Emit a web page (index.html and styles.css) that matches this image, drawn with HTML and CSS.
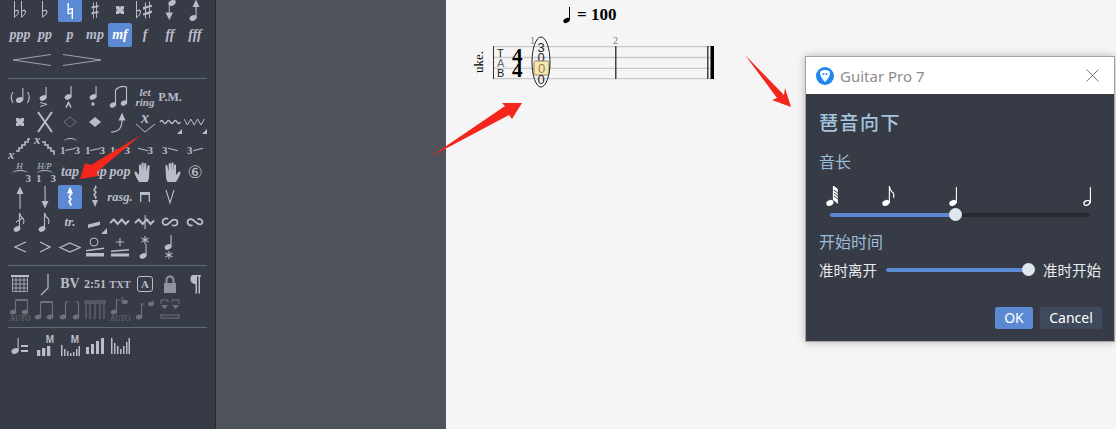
FILE: index.html
```html
<!DOCTYPE html>
<html lang="zh-CN">
<head>
  <meta charset="UTF-8">
  <title>Guitar Pro 7</title>
  <link rel="stylesheet" href="styles.css">
</head>
<body>

<svg class="defs" width="0" height="0">
  <symbol id="flat" viewBox="0 0 24 24"><path d="M9 3h1v9.500c1.800-1.400 4.500-1.100 4.500 1.200 0 2.400-3 4.400-5.500 6.300zM10 13.800v4.300c1.700-1.200 3.300-2.400 3.300-3.900 0-1.300-2-1.500-3.300-.4z"/></symbol>
  <symbol id="dflat" viewBox="0 0 24 24"><path d="M6 3h1v9.500c1.500-1.400 4-1.100 4 1.200 0 2.400-2.600 4.400-5 6.300zM7 13.800v4.300c1.400-1.200 2.900-2.400 2.900-3.900 0-1.300-1.800-1.500-2.900-.4z"/><path d="M13 3h1v9.500c1.500-1.400 4-1.100 4 1.200 0 2.400-2.600 4.400-5 6.300zM14 13.800v4.300c1.400-1.200 2.900-2.400 2.900-3.900 0-1.300-1.800-1.500-2.900-.4z"/></symbol>
  <symbol id="natural" viewBox="0 0 24 24"><path d="M9.500 5h1.400v5.700l4.100-1V21h-1.400v-5.400l-4.100 1zM10.900 12.200v2.800l2.700-.7v-2.800z"/></symbol>
  <symbol id="sharp" viewBox="0 0 24 24"><path d="M10 4.500h.9v3.800l2.200-.6V4h.9v3.500l1.500-.4v2l-1.500.4v3.900l1.500-.4v2l-1.500.4V20h-.9v-4.800l-2.200.6V20.500H10v-4.500l-1.500.4v-2l1.500-.4v-3.900l-1.500.4v-2l1.500-.4zM10.900 10.100v3.900l2.200-.6V9.500z"/></symbol>
  <symbol id="dsharp" viewBox="0 0 24 24"><path d="M8 8h3l1 1.500L13 8h3v3l-1.500 1 1.500 1v3h-3l-1-1.500L11 16H8v-3l1.500-1L8 11z"/></symbol>
  <symbol id="flatsharp" viewBox="0 0 24 24"><path d="M3 3h1v9.500c1.500-1.500 4-1.200 4 1.200 0 2.600-2.700 4.800-5 7zM4 13.800v4.800c1.400-1.300 2.800-2.700 2.800-4.300 0-1.400-1.700-1.700-2.800-.5z"/><path d="M12 4.500h1v3.800l3-.8V3.500h1v3.700l2-.5v2.100l-2 .5v3.800l2-.5v2.100l-2 .5V20h-1v-4l-3 .8V20.500h-1v-3.400l-2 .5v-2.100l2-.5v-3.800l-2 .5V9.100l2-.5zM13 10.400v3.800l3-.8V9.600z"/></symbol>
  <symbol id="notedown" viewBox="0 0 24 24"><ellipse cx="14" cy="5" rx="3.700" ry="2.700" transform="rotate(-25 14 5)"/><rect x="16.400" y="1" width="1" height="4"/><rect x="10.800" y="5" width="1" height="10"/><path d="M7.500 14.500h7.500L11.300 22z"/></symbol>
  <symbol id="noteup" viewBox="0 0 24 24"><ellipse cx="10" cy="20" rx="3.700" ry="2.700" transform="rotate(-25 10 20)"/><rect x="12.500" y="8" width="1.100" height="12"/><path d="M9.500 9L13 1.500 16.500 9z"/></symbol>
  <symbol id="ghost" viewBox="0 0 24 24"><ellipse cx="11.500" cy="15" rx="3.700" ry="2.700" transform="rotate(-25 11.500 15)"/><rect x="14.300" y="3" width="1.100" height="12"/><path d="M5 7Q1.500 12 5 18M19.500 7q3.500 5 0 11" fill="none" stroke="currentColor" stroke-width="1.200"/></symbol>
  <symbol id="accent" viewBox="0 0 24 24"><ellipse cx="10" cy="13" rx="3.500" ry="2.600" transform="rotate(-25 10 13)"/><rect x="12.500" y="2" width="1.100" height="11"/><path d="M7 17.500l7 1.800-7 2.200" fill="none" stroke="currentColor"/></symbol>
  <symbol id="marcato" viewBox="0 0 24 24"><ellipse cx="10" cy="12" rx="3.500" ry="2.600" transform="rotate(-25 10 12)"/><rect x="12.500" y="1" width="1.100" height="11"/><path d="M8 22.500l2.500-5 2.500 5" fill="none" stroke="currentColor" stroke-width="1.600"/></symbol>
  <symbol id="stacc" viewBox="0 0 24 24"><ellipse cx="10" cy="12" rx="3.500" ry="2.600" transform="rotate(-25 10 12)"/><rect x="12.500" y="1" width="1.100" height="11"/><circle cx="10" cy="19" r="1.700"/></symbol>
  <symbol id="beamtie" viewBox="0 0 24 24"><ellipse cx="5" cy="20" rx="3.300" ry="2.400" transform="rotate(-25 5 20)"/><ellipse cx="16" cy="18" rx="3.300" ry="2.400" transform="rotate(-25 16 18)"/><path d="M7.500 20V5q5-5 11-3v16" fill="none" stroke="currentColor" stroke-width="1.100"/></symbol>
  <symbol id="bigx" viewBox="0 0 24 24"><path d="M5 2l14 20M19 2L5 22" fill="none" stroke="currentColor" stroke-width="2"/></symbol>
  <symbol id="hollow" viewBox="0 0 24 24"><path d="M12 7l6 5-6 5-6-5z" fill="none" stroke="currentColor"/></symbol>
  <symbol id="solid" viewBox="0 0 24 24"><path d="M12 7l6 5-6 5-6-5z"/></symbol>
  <symbol id="bendup" viewBox="0 0 24 24"><path d="M3 22c7 0 11-3 11-12" fill="none" stroke="currentColor" stroke-width="1.200"/><path d="M14 2.500l3.500 8h-7z"/></symbol>
  <symbol id="xv" viewBox="0 0 24 24"><path d="M3 14l9 8 10-8" fill="none" stroke="currentColor"/><text x="12" y="13" text-anchor="middle" class="svg-serif" font-size="16">x</text></symbol>
  <symbol id="wave" viewBox="0 0 24 24"><path d="M2 12q1.700-3 3.400 0t3.400 0 3.400 0 3.400 0 3.400 0 3.400 0" fill="none" stroke="currentColor" stroke-width="1.500"/><path d="M24 24v-5l-5 5z"/></symbol>
  <symbol id="zig" viewBox="0 0 24 24"><path d="M1 9l3.400 6 3.400-6 3.400 6 3.400-6 3.400 6 3.400-6" fill="none" stroke="currentColor"/><path d="M24 24v-5l-5 5z"/></symbol>
  <symbol id="slideup" viewBox="0 0 24 24"><text x="0" y="24" class="svg-serif" font-size="13">x</text><path d="M8 16h3v-3h3v-3h3V7h3V4h2" fill="none" stroke="currentColor" stroke-width="1.600"/></symbol>
  <symbol id="slidedown" viewBox="0 0 24 24"><text x="1" y="9" class="svg-serif" font-size="13">x</text><path d="M9 7h3v3h3v3h3v3h3v3h1" fill="none" stroke="currentColor" stroke-width="1.600"/></symbol>
  <symbol id="hand" viewBox="0 0 24 24"><path d="M6 22c-2-3-4-7-4.500-9-.3-1.500 1.200-2 2-1L6 15V5.500c0-1.500 2-1.500 2.100 0L8.500 11V3.500c0-1.500 2.200-1.500 2.200 0V11l.5-7c.1-1.500 2.100-1.500 2.100 0v7.500L14.500 6c.2-1.500 2.200-1.300 2.100.2L16 17c0 2-1 3.500-1.500 5z"/></symbol>
  <symbol id="hand2" viewBox="0 0 24 24"><path d="M18 22c2-3 4-7 4.500-9 .3-1.500-1.200-2-2-1L18 15V5.500c0-1.500-2-1.500-2.100 0L15.500 11V3.500c0-1.500-2.200-1.500-2.200 0V11l-.5-7c-.1-1.500-2.100-1.500-2.100 0v7.500L9.500 6c-.2-1.500-2.200-1.300-2.100.2L8 17c0 2 1 3.500 1.500 5z"/></symbol>
  <symbol id="up" viewBox="0 0 24 24"><rect x="11.500" y="7" width="1.100" height="17"/><path d="M8.500 9L12 1.500 15.500 9z"/></symbol>
  <symbol id="down" viewBox="0 0 24 24"><rect x="11.500" y="1" width="1.100" height="17"/><path d="M8.500 16L12 23.500 15.500 16z"/></symbol>
  <symbol id="waveup" viewBox="0 0 24 24"><path d="M12 8q1.800 1.200 0 2.500t0 2.500 0 2.500 0 2.500 0 2.500" fill="none" stroke="currentColor" stroke-width="1.600"/><path d="M9 8.500L12 2l3 6.500z"/></symbol>
  <symbol id="wavedown" viewBox="0 0 24 24"><path d="M12 1q1.800 1.200 0 2.500t0 2.500 0 2.500 0 2.500 0 2.500" fill="none" stroke="currentColor" stroke-width="1.600"/><path d="M9 15l3 7 3-7z"/></symbol>
  <symbol id="downstroke" viewBox="0 0 24 24"><path d="M7 7h10v10h-1.300v-7H8.300v7H7z"/></symbol>
  <symbol id="upstroke" viewBox="0 0 24 24"><path d="M8 5l4 13 4-13" fill="none" stroke="currentColor" stroke-width="1.100"/></symbol>
  <symbol id="grace" viewBox="0 0 24 24"><ellipse cx="9" cy="19" rx="3.500" ry="2.600" transform="rotate(-25 9 19)"/><path d="M11.500 19V3q1 4 4 6 1 2 0 5M8 12l7-4" fill="none" stroke="currentColor" stroke-width="1.100"/></symbol>
  <symbol id="grace2" viewBox="0 0 24 24"><ellipse cx="9" cy="19" rx="3.500" ry="2.600" transform="rotate(-25 9 19)"/><path d="M11.500 19V3q1 4 4 6 1 2 0 5" fill="none" stroke="currentColor" stroke-width="1.100"/></symbol>
  <symbol id="trem" viewBox="0 0 24 24"><path d="M5 14.500l12-3v3.500L5 18zM24 24v-6l-6 6z"/></symbol>
  <symbol id="wavy" viewBox="0 0 24 24"><path d="M2 13l3.800-3.500 3.800 4.500 4.200-4.500 3.800 4.500 3.400-3.500" fill="none" stroke="currentColor" stroke-width="2"/></symbol>
  <symbol id="wavyline" viewBox="0 0 24 24"><path d="M2 13l3.800-3.500 3.800 4.500 4.200-4.500 3.800 4.500 3.400-3.500" fill="none" stroke="currentColor" stroke-width="2"/><rect x="11.500" y="5" width="1.100" height="14"/></symbol>
  <symbol id="turn" viewBox="0 0 24 24"><path d="M10 9C7 7.500 4.500 9.500 4.500 12s3 4 5.500 2l4-3.500c2.500-2 5.500-.5 5.500 2s-2.500 4-5.500 2.500" fill="none" stroke="currentColor" stroke-width="1.800"/></symbol>
  <symbol id="turn2" viewBox="0 0 24 24"><path d="M9.500 15C7 16.500 4.500 14.500 4.500 12s3-4 5.500-2l4.500 3.500c2.500 2 5 .5 5-1.500s-2.500-4-5-2.500" fill="none" stroke="currentColor" stroke-width="1.800"/></symbol>
  <symbol id="lt" viewBox="0 0 24 24"><path d="M18 7L7 12l11 5" fill="none" stroke="currentColor" stroke-width="1.300"/></symbol>
  <symbol id="gt" viewBox="0 0 24 24"><path d="M7 7l10 5-10 5" fill="none" stroke="currentColor" stroke-width="1.300"/></symbol>
  <symbol id="ltgt" viewBox="0 0 24 24"><path d="M12 8l10 4.500L12 17 2 12.500z" fill="none" stroke="currentColor" stroke-width="1.300"/></symbol>
  <symbol id="openwedge" viewBox="0 0 24 24"><circle cx="11" cy="7" r="4" fill="none" stroke="currentColor"/><path d="M3 15l18-2.500V14L3 16.500zM3 18h18v3.500H3z"/></symbol>
  <symbol id="closewedge" viewBox="0 0 24 24"><path d="M12 3v8M8 7h8" fill="none" stroke="currentColor" stroke-width="1.100"/><path d="M3 15.500L21 14v1.500L3 17zM3 18.500h18V21.500H3z"/></symbol>
  <symbol id="starnote" viewBox="0 0 24 24"><path d="M12 1v8M8.500 3l7 4M15.500 3l-7 4" stroke="currentColor" fill="none" stroke-width="1.100"/><ellipse cx="10" cy="21" rx="3.500" ry="2.600" transform="rotate(-25 10 21)"/><rect x="12.500" y="9" width="1.100" height="12"/></symbol>
  <symbol id="notestar" viewBox="0 0 24 24"><ellipse cx="10" cy="12" rx="3.500" ry="2.600" transform="rotate(-25 10 12)"/><rect x="12.500" y="0" width="1.100" height="12"/><path d="M11 16v8M7.500 18l7 4M14.500 18l-7 4" stroke="currentColor" fill="none" stroke-width="1.100"/></symbol>
  <symbol id="chord" viewBox="0 0 24 24"><path d="M4.500 4.500h15v15h-15zM4.500 8h15M4.500 12h15M4.500 16h15M8 4.500v15M12 4.500v15M16 4.500v15" fill="none" stroke="currentColor" stroke-width=".8"/><path d="M3 3h18v2H3z"/></symbol>
  <symbol id="slash" viewBox="0 0 24 24"><path d="M15 2v14L8 23" fill="none" stroke="currentColor" stroke-width="1.200"/></symbol>
  <symbol id="lock" viewBox="0 0 24 24"><path d="M8.500 11V8a3.500 3.500 0 0 1 7 0v3" fill="none" stroke="currentColor" stroke-width="2"/><rect x="6" y="11" width="12" height="10"/></symbol>
  <symbol id="pilcrow" viewBox="0 0 24 24"><path d="M10.500 3H18v1.500h-1v17h-1.500v-17h-1.500v17h-1.500V12c-2.500 0-5-1.500-5-4.500S8 3 10.500 3z"/></symbol>
  <symbol id="beam" viewBox="0 0 24 24"><ellipse cx="5" cy="20" rx="3.300" ry="2.400" transform="rotate(-15 5 20)"/><ellipse cx="17" cy="20" rx="3.300" ry="2.400" transform="rotate(-15 17 20)"/><path d="M7.500 20V5M19.500 20V5" fill="none" stroke="currentColor" stroke-width="1.100"/><rect x="7.500" y="4" width="12" height="2"/></symbol>
  <symbol id="beamauto" viewBox="0 0 24 24"><ellipse cx="5" cy="15" rx="3.300" ry="2.400" transform="rotate(-15 5 15)"/><ellipse cx="17" cy="15" rx="3.300" ry="2.400" transform="rotate(-15 17 15)"/><path d="M7.500 15V3M19.500 15V3" fill="none" stroke="currentColor" stroke-width="1.100"/><rect x="7.500" y="2" width="12" height="2"/><text x="12" y="24" text-anchor="middle" class="svg-auto" font-size="7.500">AUTO</text></symbol>
  <symbol id="unbeam" viewBox="0 0 24 24"><ellipse cx="5" cy="20" rx="3.300" ry="2.400" transform="rotate(-15 5 20)"/><ellipse cx="18" cy="20" rx="3.300" ry="2.400" transform="rotate(-15 18 20)"/><path d="M7.500 20V5h3M20.500 20V5h-3" fill="none" stroke="currentColor" stroke-width="1.100"/></symbol>
  <symbol id="frame" viewBox="0 0 24 24"><path d="M2 4h20v2H2zM3 6v16M7 6v16M12 6v16M17 6v16M21 6v16" fill="none" stroke="currentColor"/></symbol>
  <symbol id="tiltauto" viewBox="0 0 24 24"><ellipse cx="6" cy="15" rx="3.300" ry="2.400" transform="rotate(-15 6 15)"/><ellipse cx="17" cy="5" rx="3" ry="2.200" transform="rotate(-15 17 5)"/><path d="M8.500 15V3h3M14 5V0" fill="none" stroke="currentColor" stroke-width="1.100"/><text x="12" y="24" text-anchor="middle" class="svg-auto" font-size="7.500">AUTO</text></symbol>
  <symbol id="tilt" viewBox="0 0 24 24"><ellipse cx="6" cy="20" rx="3.300" ry="2.400" transform="rotate(-15 6 20)"/><ellipse cx="18" cy="7" rx="3" ry="2.200" transform="rotate(-15 18 7)"/><path d="M8.500 20V7h3M20 7V3" fill="none" stroke="currentColor" stroke-width="1.100"/></symbol>
  <symbol id="brackets" viewBox="0 0 24 24"><path d="M3 7V3h7v2M14 5V3h7v4M3 17v4h18v-4M3 18h18" fill="none" stroke="currentColor"/><path d="M3 8h7l-3.500 4zM14 8h7l-3.500 4z"/></symbol>
  <symbol id="tempo" viewBox="0 0 24 24"><ellipse cx="7" cy="17" rx="3.700" ry="2.700" transform="rotate(-25 7 17)"/><rect x="9.600" y="4" width="1.100" height="13"/><rect x="13" y="11" width="7" height="2"/><rect x="13" y="16" width="7" height="2"/></symbol>
  <symbol id="bars1" viewBox="0 0 24 24"><rect x="4" y="16" width="3.300" height="6"/><rect x="9" y="14" width="3.300" height="8"/><rect x="14" y="12" width="3.300" height="10"/></symbol>
  <symbol id="bars2" viewBox="0 0 24 24"><path d="M3 11h1.500v11H3zM6 15h1.500v7H6zM9 17h1.500v5H9zM12 19h1.500v3H12zM15 18h1.500v4H15zM18 15h1.500v7H18zM20.500 12H22v10h-1.500z"/></symbol>
  <symbol id="bars3" viewBox="0 0 24 24"><rect x="3" y="13" width="3" height="7"/><rect x="8" y="10" width="3" height="10"/><rect x="13" y="7" width="3" height="13"/><rect x="18" y="4" width="3" height="16"/></symbol>
  <symbol id="bars4" viewBox="0 0 24 24"><path d="M3 4h1.500v16H3zM6 9h1.500v11H6zM9 12h1.500v8H9zM12 15h1.500v5H12zM15 12h1.500v8H15zM18 8h1.500v12H18zM20.500 4H22v16h-1.500z"/></symbol>
  <symbol id="whitequarter" viewBox="0 0 24 24"><ellipse cx="9" cy="19" rx="3.800" ry="2.800" transform="rotate(-25 9 19)"/><rect x="12" y="3" width="1.100" height="16"/></symbol>
  <symbol id="thirtysecond" viewBox="0 0 24 24"><ellipse cx="9" cy="19" rx="3.800" ry="2.800" transform="rotate(-25 9 19)"/><path d="M12 2h1.200l3.800 3v15l-3.800-3.500H12z"/><path d="M13 6l4 3M13 9l4 3M13 12l4 3" stroke="#373b45" fill="none"/></symbol>
  <symbol id="eighth" viewBox="0 0 24 24"><ellipse cx="9" cy="19" rx="3.800" ry="2.800" transform="rotate(-25 9 19)"/><path d="M12.500 19V2q1 5 4 7 1 2 .3 5" fill="none" stroke="currentColor" stroke-width="1.100"/></symbol>
  <symbol id="half" viewBox="0 0 24 24"><ellipse cx="9" cy="19" rx="3.200" ry="2.200" transform="rotate(-25 9 19)" fill="none" stroke="currentColor" stroke-width="1.300"/><rect x="12" y="3" width="1.100" height="16"/></symbol>
</svg>

<div class="app">
  <aside class="palette">
    <div class="tools tools-first">
      <span class="tool"><svg><use href="#dflat"/></svg></span>
      <span class="tool"><svg><use href="#flat"/></svg></span>
      <span class="tool is-active"><svg><use href="#natural"/></svg></span>
      <span class="tool"><svg><use href="#sharp"/></svg></span>
      <span class="tool"><svg><use href="#dsharp"/></svg></span>
      <span class="tool"><svg><use href="#flatsharp"/></svg></span>
      <span class="tool"><svg><use href="#notedown"/></svg></span>
      <span class="tool"><svg><use href="#noteup"/></svg></span>

      <span class="tool dyn">ppp</span>
      <span class="tool dyn">pp</span>
      <span class="tool dyn">p</span>
      <span class="tool dyn">mp</span>
      <span class="tool dyn is-active">mf</span>
      <span class="tool dyn">f</span>
      <span class="tool dyn">ff</span>
      <span class="tool dyn">fff</span>

      <span class="tool wide"><svg viewBox="0 0 49 24"><path d="M5 12L43 6.500M5 12l38 5.500" fill="none" stroke="currentColor" stroke-width=".8"/></svg></span>
      <span class="tool wide"><svg viewBox="0 0 49 24"><path d="M5 6.500L43 12M5 17.500L43 12" fill="none" stroke="currentColor" stroke-width=".8"/></svg></span>
    </div>

    <hr class="divider">

    <div class="tools">
      <span class="tool"><svg><use href="#ghost"/></svg></span>
      <span class="tool"><svg><use href="#accent"/></svg></span>
      <span class="tool"><svg><use href="#marcato"/></svg></span>
      <span class="tool"><svg><use href="#stacc"/></svg></span>
      <span class="tool"><svg><use href="#beamtie"/></svg></span>
      <span class="tool letring">let<br>ring</span>
      <span class="tool word">P.M.</span>
      <span class="tool"></span>

      <span class="tool"><svg><use href="#dsharp"/></svg></span>
      <span class="tool"><svg><use href="#bigx"/></svg></span>
      <span class="tool dim"><svg><use href="#hollow"/></svg></span>
      <span class="tool"><svg><use href="#solid"/></svg></span>
      <span class="tool"><svg><use href="#bendup"/></svg></span>
      <span class="tool"><svg><use href="#xv"/></svg></span>
      <span class="tool"><svg><use href="#wave"/></svg></span>
      <span class="tool"><svg><use href="#zig"/></svg></span>

      <span class="tool"><svg><use href="#slideup"/></svg></span>
      <span class="tool"><svg><use href="#slidedown"/></svg></span>
      <span class="tool tie arc"><i>1</i><i>3</i></span>
      <span class="tool tie"><i>1</i><i>3</i></span>
      <span class="tool tie"><i>1</i><i>3</i></span>
      <span class="tool tie right"><i>3</i></span>
      <span class="tool tie left"><i>3</i></span>
      <span class="tool tie left up"><i>3</i></span>

      <span class="tool hp arc"><b>H</b><i>3</i></span>
      <span class="tool hp arc"><b>H/P</b><i>1</i><i>3</i></span>
      <span class="tool word-it">tap</span>
      <span class="tool word-it">slap</span>
      <span class="tool word-it">pop</span>
      <span class="tool"><svg><use href="#hand"/></svg></span>
      <span class="tool"><svg><use href="#hand2"/></svg></span>
      <span class="tool circled">⑥</span>

      <span class="tool"><svg><use href="#up"/></svg></span>
      <span class="tool"><svg><use href="#down"/></svg></span>
      <span class="tool is-active"><svg><use href="#waveup"/></svg></span>
      <span class="tool"><svg><use href="#wavedown"/></svg></span>
      <span class="tool rasg">rasg.</span>
      <span class="tool"><svg><use href="#downstroke"/></svg></span>
      <span class="tool"><svg><use href="#upstroke"/></svg></span>
      <span class="tool"></span>

      <span class="tool"><svg><use href="#grace"/></svg></span>
      <span class="tool"><svg><use href="#grace2"/></svg></span>
      <span class="tool word-it small">tr.</span>
      <span class="tool"><svg><use href="#trem"/></svg></span>
      <span class="tool"><svg><use href="#wavy"/></svg></span>
      <span class="tool"><svg><use href="#wavyline"/></svg></span>
      <span class="tool"><svg><use href="#turn"/></svg></span>
      <span class="tool"><svg><use href="#turn2"/></svg></span>

      <span class="tool"><svg><use href="#lt"/></svg></span>
      <span class="tool"><svg><use href="#gt"/></svg></span>
      <span class="tool"><svg><use href="#ltgt"/></svg></span>
      <span class="tool"><svg><use href="#openwedge"/></svg></span>
      <span class="tool"><svg><use href="#closewedge"/></svg></span>
      <span class="tool"><svg><use href="#starnote"/></svg></span>
      <span class="tool"><svg><use href="#notestar"/></svg></span>
      <span class="tool"></span>
    </div>

    <hr class="divider">

    <div class="tools">
      <span class="tool"><svg><use href="#chord"/></svg></span>
      <span class="tool"><svg><use href="#slash"/></svg></span>
      <span class="tool word big">BV</span>
      <span class="tool word">2:51</span>
      <span class="tool word tiny">TXT</span>
      <span class="tool"><span class="boxed">A</span></span>
      <span class="tool soft"><svg><use href="#lock"/></svg></span>
      <span class="tool"><svg><use href="#pilcrow"/></svg></span>

      <span class="tool dim"><svg><use href="#beamauto"/></svg></span>
      <span class="tool dim"><svg><use href="#beam"/></svg></span>
      <span class="tool dim"><svg><use href="#unbeam"/></svg></span>
      <span class="tool dim"><svg><use href="#frame"/></svg></span>
      <span class="tool dim"><svg><use href="#tiltauto"/></svg></span>
      <span class="tool dim"><svg><use href="#tilt"/></svg></span>
      <span class="tool dim"><svg><use href="#brackets"/></svg></span>
      <span class="tool"></span>
    </div>

    <hr class="divider">

    <div class="tools">
      <span class="tool"><svg><use href="#tempo"/></svg></span>
      <span class="tool bars"><b>M</b><svg><use href="#bars1"/></svg></span>
      <span class="tool bars"><b>M</b><svg><use href="#bars2"/></svg></span>
      <span class="tool"><svg><use href="#bars3"/></svg></span>
      <span class="tool"><svg><use href="#bars4"/></svg></span>
    </div>
  </aside>

  <div class="side-panel"></div>

  <main class="page">
    <svg class="score" width="300" height="100" viewBox="0 0 300 100">
      <ellipse cx="120.500" cy="20.500" rx="3.300" ry="2.300" transform="rotate(-25 120.500 20.500)"/>
      <rect x="123" y="7" width="1" height="13"/>
      <text x="131" y="20" class="tempo-text">= 100</text>
      <text transform="translate(37 73) rotate(-90)" class="uke">uke.</text>
      <path d="M47 46.700h221M47 57.500h221M47 68.300h221M47 78.700h221" stroke="#c9c9c9" stroke-width="1.300"/>
      <rect x="47" y="46" width="1" height="33" fill="#333"/>
      <text x="51" y="57" class="tab">T</text>
      <text x="51" y="67" class="tab tab-a">A</text>
      <text x="51" y="77" class="tab">B</text>
      <text x="66" y="62.500" class="sig">4</text>
      <text x="66" y="77" class="sig">4</text>
      <text x="84" y="44" class="bar-no">1</text>
      <text x="167" y="44" class="bar-no">2</text>
      <text x="95" y="52" class="fret">3</text>
      <text x="95" y="62" class="fret">0</text>
      <rect x="88" y="61" width="15" height="14" rx="1.500" fill="#fbe6ae" stroke="#8b8364"/>
      <text x="95.500" y="73" class="fret sel">0</text>
      <text x="95" y="84" class="fret">0</text>
      <ellipse cx="95" cy="62" rx="9" ry="25" fill="none" stroke="#222"/>
      <rect x="169" y="46" width="1.500" height="33" fill="#444"/>
      <rect x="261" y="46" width="1.500" height="33" fill="#444"/>
      <rect x="264.500" y="46" width="3.500" height="33" fill="#000"/>
    </svg>
  </main>

  <section class="dialog">
    <header class="dialog-title">
      <svg class="app-logo" width="18" height="18" viewBox="0 0 18 18">
        <circle cx="9" cy="9" r="9" fill="#1f88f0"/>
        <path d="M9 3c3 0 5 .8 5 3 0 3-3 7-5 9-2-2-5-6-5-9 0-2.200 2-3 5-3z" fill="#fff"/>
        <circle cx="7.500" cy="7" r="1" fill="#1f88f0"/>
        <circle cx="10.500" cy="7" r="1" fill="#1f88f0"/>
      </svg>
      <span class="dialog-name">Guitar Pro 7</span>
      <svg class="dialog-close" width="13" height="13" viewBox="0 0 13 13"><path d="M.5.500l12 12M12.500.500l-12 12" stroke="#777" fill="none"/></svg>
    </header>
    <div class="dialog-body">
      <h2 class="dialog-heading">琶音向下</h2>
      <div class="field-label">音长</div>
      <div class="note-scale">
        <svg><use href="#thirtysecond"/></svg>
        <svg><use href="#eighth"/></svg>
        <svg><use href="#whitequarter"/></svg>
        <svg><use href="#half"/></svg>
      </div>
      <div class="slider slider-length"><span class="slider-fill fill-half"></span><span class="slider-thumb"></span></div>
      <div class="field-label label-start">开始时间</div>
      <div class="start-row">
        <span>准时离开</span>
        <div class="slider slider-start"><span class="slider-fill fill-full"></span><span class="slider-thumb"></span></div>
        <span>准时开始</span>
      </div>
      <div class="dialog-actions">
        <button class="btn btn-ok">OK</button>
        <button class="btn btn-cancel">Cancel</button>
      </div>
    </div>
  </section>

  <svg class="arrows" width="1116" height="429" viewBox="0 0 1116 429">
    <path d="M80 179L85 163 91 165 141 135 97 172 98 176z"/>
    <path d="M522 103L502 103 505 106 430 157 509 115 512 119z"/>
    <path d="M791 107L785 88 784 95 745 55 777 98 772 100z"/>
  </svg>
</div>

</body>
</html>
```

FILE: styles.css
```css
* {
  box-sizing: border-box;
}

body {
  margin: 0;
  font-family: "Noto Sans", "Noto Sans CJK SC", sans-serif;
}

.defs {
  display: none;
}

.svg-serif {
  font-family: "Liberation Serif", serif;
  font-style: italic;
  font-weight: bold;
}

.svg-auto {
  font-family: "Liberation Serif", serif;
}

.app {
  position: relative;
  display: flex;
  width: 1116px;
  height: 429px;
  overflow: hidden;
}

/* left palette */
.palette {
  flex: 0 0 216px;
  padding: 0 8px;
  background: #373b45;
  border-right: 1px solid #24272d;
  color: #b9bcca;
}

.tools {
  display: grid;
  grid-template-columns: repeat(8, 24px);
  grid-auto-rows: 24px;
  gap: 1px;
}

.tools-first {
  margin-top: -2px;
}

.divider {
  width: 199px;
  height: 1px;
  margin: 6px 0;
  border: 0;
  background: #5d6b7f;
}

.tool {
  position: relative;
  display: flex;
  align-items: center;
  justify-content: center;
  border-radius: 2px;
  font-family: "Liberation Serif", serif;
  white-space: nowrap;
}

.tool svg {
  display: block;
  width: 24px;
  height: 24px;
  fill: currentColor;
}

.tool.wide {
  grid-column: span 2;
}

.tool.wide svg {
  width: 49px;
}

.is-active {
  background: #5b8ad3;
  color: #fff;
}

.dim {
  color: #6d727e;
}

.soft {
  color: #8f93a0;
}

.dyn {
  font-size: 14px;
  font-style: italic;
  font-weight: bold;
}

.letring {
  font-size: 11px;
  line-height: 10px;
  font-style: italic;
  font-weight: bold;
  text-align: center;
}

.word {
  font-size: 12px;
  font-weight: bold;
}

.word.big {
  font-size: 14px;
}

.word.tiny {
  font-size: 10.500px;
}

.word-it {
  font-size: 14px;
  font-style: italic;
  font-weight: bold;
}

.word-it.small {
  font-size: 13px;
}

.rasg {
  font-size: 12.500px;
  font-style: italic;
  font-weight: bold;
}

.circled {
  font-family: "DejaVu Sans", sans-serif;
  font-size: 17px;
}

.boxed {
  display: block;
  width: 16px;
  height: 16px;
  border: 1px solid currentColor;
  border-radius: 3px;
  font-size: 11px;
  font-weight: bold;
  line-height: 14px;
  text-align: center;
}

/* 1-3 tie marks */
.tie {
  justify-content: space-between;
  padding: 5px 2px 0;
  font-size: 11px;
}

.tie i,
.hp i {
  font-style: normal;
  font-weight: bold;
}

.tie::after {
  content: "";
  position: absolute;
  left: 7px;
  top: 14px;
  width: 10px;
  height: 1px;
  background: currentColor;
  transform: rotate(-12deg);
}

.tie.right {
  justify-content: flex-end;
  padding-right: 4px;
}

.tie.right::after {
  left: 5px;
  transform: rotate(14deg);
}

.tie.left {
  justify-content: flex-start;
  padding-left: 4px;
}

.tie.left::after {
  left: 10px;
  transform: rotate(14deg);
}

.tie.up::after {
  transform: rotate(-14deg);
}

.arc::before {
  content: "";
  position: absolute;
  left: 6px;
  top: 3px;
  width: 13px;
  height: 6px;
  border-top: 1px solid currentColor;
  border-radius: 50%;
}

.hp {
  justify-content: space-between;
  align-items: flex-end;
  padding: 0 1px 0 3px;
  font-size: 11px;
  line-height: 12px;
}

.hp i:last-child {
  margin-left: auto;
}

.hp b {
  position: absolute;
  left: 0;
  right: 0;
  top: 0;
  padding-right: 1px;
  font-size: 9px;
  font-style: italic;
  font-weight: normal;
  text-align: center;
}

.hp.arc::before {
  top: 10px;
  left: 4px;
  width: 16px;
}

.bars b {
  position: absolute;
  top: 1px;
  right: 3px;
  font-family: "Liberation Sans", sans-serif;
  font-size: 10px;
  line-height: 9px;
}

/* middle panel */
.side-panel {
  flex: 0 0 230px;
  background: #4e525b;
}

/* score page */
.page {
  flex: 1;
  background: #f5f5f5;
}

.score {
  display: block;
}

.tempo-text {
  font-family: "Liberation Serif", serif;
  font-size: 17px;
  font-weight: bold;
}

.uke {
  font-family: "Liberation Serif", serif;
  font-size: 13px;
}

.tab {
  font-family: "Liberation Sans", sans-serif;
  font-size: 11px;
  fill: #222;
}

.tab-a {
  fill: #666;
}

.sig {
  font-family: "Liberation Serif", serif;
  font-size: 21px;
  font-weight: bold;
}

.bar-no {
  font-family: "Liberation Serif", serif;
  font-size: 10px;
  fill: #777;
}

.fret {
  font-family: "Liberation Sans", sans-serif;
  font-size: 13px;
  fill: #222;
  text-anchor: middle;
}

.fret.sel {
  fill: #8d8160;
}

/* dialog */
.dialog {
  position: absolute;
  left: 805px;
  top: 56px;
  width: 310px;
  height: 286px;
  border: 1px solid #a5a5a5;
  background: #373b45;
  box-shadow: 0 0 8px rgba(0, 0, 0, 0.25);
}

.dialog-title {
  display: flex;
  align-items: center;
  height: 37px;
  padding: 0 15px 0 10px;
  background: #fff;
}

.app-logo {
  flex: none;
}

.dialog-name {
  margin-left: 6px;
  font-size: 15px;
  color: #8c8c8c;
}

.dialog-close {
  margin-left: auto;
}

.dialog-body {
  padding: 16px 12px 0 13px;
}

.dialog-heading {
  margin: 0;
  font-family: "Noto Sans CJK SC", sans-serif;
  font-size: 19px;
  font-weight: 500;
  line-height: 24px;
  letter-spacing: 1.500px;
  color: #a6c4df;
}

.field-label {
  margin-top: 16px;
  font-family: "Noto Sans CJK SC", sans-serif;
  font-size: 16px;
  line-height: 22px;
  color: #9dbcd8;
}

.note-scale {
  display: flex;
  height: 24px;
  margin-top: 12px;
  color: #fff;
}

.note-scale svg {
  width: 24px;
  height: 24px;
  fill: currentColor;
}

.note-scale svg:nth-child(1) {
  margin-left: 2px;
}

.note-scale svg:nth-child(2) {
  margin-left: 32px;
}

.note-scale svg:nth-child(3) {
  margin-left: 43px;
}

.note-scale svg:nth-child(4) {
  margin-left: 111px;
}

.slider {
  position: relative;
  height: 4px;
  border-radius: 2px;
  background: #262a32;
}

.slider-length {
  width: 260px;
  margin: 5px 0 0 11px;
}

.slider-fill {
  display: block;
  height: 100%;
  border-radius: 2px;
  background: #5b8ad3;
}

.fill-half {
  width: 48.500%;
}

.fill-full {
  width: 100%;
}

.slider-thumb {
  position: absolute;
  top: -5px;
  width: 13px;
  height: 13px;
  border-radius: 50%;
  background: #dfe6ee;
}

.slider-length .slider-thumb {
  left: 119px;
}

.slider-start .slider-thumb {
  right: -2px;
}

.label-start {
  margin-top: 13px;
}

.start-row {
  display: flex;
  align-items: center;
  gap: 9px;
  margin: 7px 1px 0 0;
  font-family: "Noto Sans CJK SC", sans-serif;
  font-size: 14.500px;
  line-height: 22px;
  color: #e8ebef;
}

.slider-start {
  flex: 1;
  margin-right: 1px;
}

.dialog-actions {
  display: flex;
  justify-content: flex-end;
  gap: 7px;
  margin-top: 26px;
}

.btn {
  height: 22px;
  padding: 0;
  border: 0;
  border-radius: 2px;
  font-family: "Noto Sans", sans-serif;
  font-size: 14px;
  line-height: 22px;
  color: #fff;
}

.btn-ok {
  width: 38px;
  background: #5b8ad3;
}

.btn-cancel {
  width: 62px;
  background: #3f4a5c;
}

/* red annotation arrows */
.arrows {
  position: absolute;
  left: 0;
  top: 0;
  fill: #f5261b;
  pointer-events: none;
}
```
